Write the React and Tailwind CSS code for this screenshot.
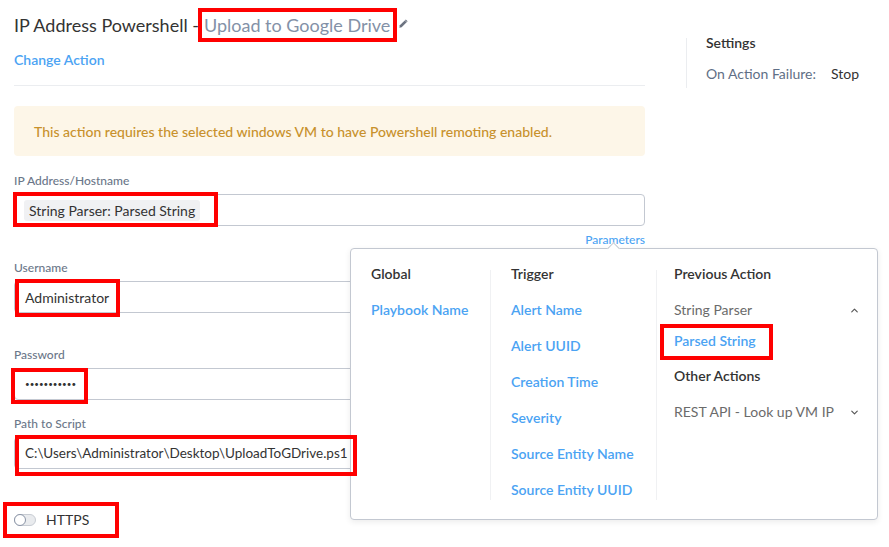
import React from "react";
import { ChevronUp, ChevronDown } from "lucide-react";

function Pencil() {
  return (
    <svg width="11" height="11" viewBox="0 0 12 12" className="ml-[8px] mb-[4px]">
      <path d="M1.5 10.5 L2 8 L8.5 1.5 L10.5 3.5 L4 10 Z" fill="#6b7280" />
      <path d="M7.5 2.5 L9.5 4.5" stroke="#fff" strokeWidth="0.6" />
    </svg>
  );
}

function RedBox({ className }) {
  return <div className={"absolute border-[4px] border-[#f00] pointer-events-none " + className} />;
}

function Field({ label, children, className = "" }) {
  return (
    <div className={className}>
      <div className="text-[12px] leading-[14px] text-[#6b7789] font-medium">{label}</div>
      <div className="mt-[6px] h-[32px] border border-[#c3c8d1] rounded-[4px] flex items-center px-[10px] text-[14px] text-[#333] overflow-hidden whitespace-nowrap">
        {children}
      </div>
    </div>
  );
}

export default function App() {
  const trig = ["Alert Name", "Alert UUID", "Creation Time", "Severity", "Source Entity Name", "Source Entity UUID"];
  return (
    <div className="relative w-[889px] h-[547px] bg-white overflow-hidden font-['Lato',sans-serif]">
      <div className="flex px-[14px]">
        <div className="w-[631px] flex flex-col">
          <div className="mt-[13px] h-[24px] flex items-center text-[18px] leading-[24px]">
            <span className="text-[#333]">IP Address Powershell -</span>
            <span className="text-[#8391a7] ml-[5px]">Upload to Google Drive</span>
            <Pencil />
          </div>
          <div className="mt-[14px] text-[14px] leading-[18px] font-semibold text-[#4ba3f3]">Change Action</div>
          <div className="mt-[16px] h-px bg-[#ebedf0]" />
          <div className="mt-[20px] h-[50px] rounded-[4px] bg-[#fdf6e8] flex items-center px-[20px] text-[14px] font-medium text-[#c8912c]">
            This action requires the selected windows VM to have Powershell remoting enabled.
          </div>
          <Field label="IP Address/Hostname" className="mt-[18px]">
            <span className="bg-[#f0f1f3] rounded-[3px] h-[21px] px-[5px] flex items-center -ml-[1px]">
              String Parser: Parsed String
            </span>
          </Field>
          <div className="mt-[7px] text-right text-[12px] leading-[14px] font-medium text-[#4ba3f3]">Parameters</div>
          <Field label="Username" className="mt-[14px]">Administrator</Field>
          <Field label="Password" className="mt-[35px]">
            <span className="tracking-[0px] text-[8px] text-[#333]">•••••••••••</span>
          </Field>
          <Field label="Path to Script" className="mt-[17px]">
            <span className="text-[13.5px]">C:\Users\Administrator\Desktop\UploadToGDrive.ps1</span>
          </Field>
          <div className="mt-[40px] flex items-center">
            <div className="w-[22px] h-[12px] rounded-full bg-[#e9ebee] border border-[#c8ccd3] relative">
              <div className="absolute -left-[1px] -top-[1px] w-[12px] h-[12px] rounded-full bg-white border-[1.5px] border-[#8a94a6]" />
            </div>
            <span className="ml-[10px] text-[14px] text-[#333]">HTTPS</span>
          </div>
        </div>
        <div className="ml-[41px] mt-[38px] h-[50px] border-l border-[#ebedf0] pl-[19px]">
          <div className="mt-[-4px] text-[14px] leading-[18px] font-semibold text-[#333]">Settings</div>
          <div className="mt-[13px] flex text-[14px] leading-[18px]">
            <span className="text-[#5f6f86]">On Action Failure:</span>
            <span className="ml-[15px] text-[#333]">Stop</span>
          </div>
        </div>
      </div>

      {/* Parameters popover */}
      <div className="absolute left-[350px] top-[248px] w-[528px] h-[272px] bg-white border border-[#c3c8d1] rounded-[4px] shadow-[0_2px_6px_rgba(0,0,0,0.08)]">
        <div className="absolute left-[258px] -top-[5px] w-[9px] h-[9px] bg-white border-l border-t border-[#c3c8d1] rotate-45" />
        <div className="flex pt-[21px] text-[14px] leading-[18px]">
          <div className="w-[139px] pl-[20px]">
            <div className="-mt-[5px] h-[18px] font-semibold text-[#333]">Global</div>
            <div className="mt-[18px] h-[18px] font-semibold text-[#4ba3f3]">Playbook Name</div>
          </div>
          <div className="w-[166px] border-l border-[#f0f1f3] pl-[20px] h-[230px]">
            <div className="-mt-[5px] h-[18px] font-semibold text-[#333]">Trigger</div>
            {trig.map((t) => (
              <div key={t} className="mt-[18px] h-[18px] font-semibold text-[#4ba3f3]">{t}</div>
            ))}
          </div>
          <div className="flex-1 border-l border-[#f0f1f3] pl-[17px] pr-[17px] h-[230px]">
            <div className="-mt-[5px] h-[18px] font-semibold text-[#333]">Previous Action</div>
            <div className="mt-[18px] h-[18px] flex items-center justify-between text-[#6b6b6b]">
              <span>String Parser</span>
              <ChevronUp size={11} strokeWidth={2.5} className="text-[#555]" />
            </div>
            <div className="mt-[13px] h-[18px] font-semibold text-[#4ba3f3]">Parsed String</div>
            <div className="mt-[17px] h-[18px] font-semibold text-[#333]">Other Actions</div>
            <div className="mt-[18px] h-[18px] flex items-center justify-between text-[#6b6b6b]">
              <span>REST API - Look up VM IP</span>
              <ChevronDown size={11} strokeWidth={2.5} className="text-[#555]" />
            </div>
          </div>
        </div>
      </div>

      {/* red annotation boxes */}
      <RedBox className="left-[198px] top-[8px] w-[199px] h-[34px]" />
      <RedBox className="left-[13px] top-[192px] w-[205px] h-[35px]" />
      <RedBox className="left-[15px] top-[279px] w-[105px] h-[38px]" />
      <RedBox className="left-[11px] top-[368px] w-[77px] h-[36px]" />
      <RedBox className="left-[15px] top-[435px] w-[342px] h-[41px]" />
      <RedBox className="left-[3px] top-[502px] w-[116px] h-[36px]" />
      <RedBox className="left-[660px] top-[324px] w-[113px] h-[36px]" />
    </div>
  );
}
